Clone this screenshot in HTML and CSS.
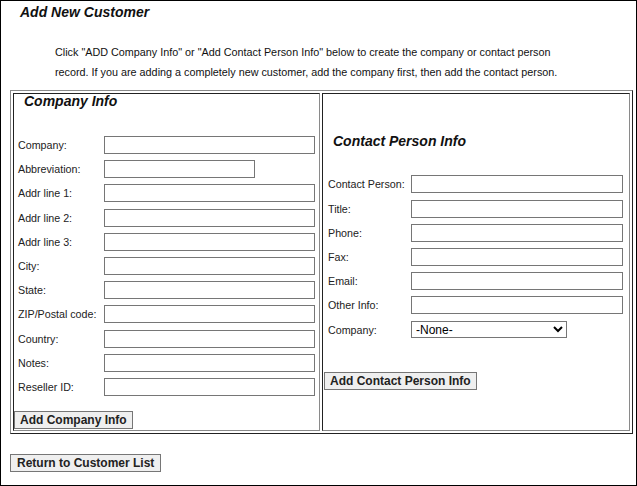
FILE: index.html
```html
<!DOCTYPE html>
<html>
<head>
<meta charset="utf-8">
<title>Add New Customer</title>
<link rel="stylesheet" href="styles.css">
</head>
<body>
<div class="page">
  <h1 class="title">Add New Customer</h1>
  <p class="intro">Click "ADD Company Info" or "Add Contact Person Info" below to create the company or contact person record. If you are adding a completely new customer, add the company first, then add the contact person.</p>
  <table class="frame">
    <tr>
      <td class="cell cell-left">
        <h2 class="section-title">Company Info</h2>
        <div class="form form-company">
          <label>Company:</label><input type="text" class="field">
          <label>Abbreviation:</label><input type="text" class="field field-short">
          <label>Addr line 1:</label><input type="text" class="field">
          <label>Addr line 2:</label><input type="text" class="field">
          <label>Addr line 3:</label><input type="text" class="field">
          <label>City:</label><input type="text" class="field">
          <label>State:</label><input type="text" class="field">
          <label>ZIP/Postal code:</label><input type="text" class="field">
          <label>Country:</label><input type="text" class="field">
          <label>Notes:</label><input type="text" class="field">
          <label>Reseller ID:</label><input type="text" class="field">
        </div>
        <button type="button" class="btn btn-company">Add Company Info</button>
      </td>
      <td class="cell cell-right">
        <h2 class="section-title section-title-contact">Contact Person Info</h2>
        <div class="form form-contact">
          <label>Contact Person:</label><input type="text" class="field">
          <label>Title:</label><input type="text" class="field">
          <label>Phone:</label><input type="text" class="field">
          <label>Fax:</label><input type="text" class="field">
          <label>Email:</label><input type="text" class="field">
          <label>Other Info:</label><input type="text" class="field">
          <label>Company:</label>
          <select class="select"><option>-None-</option></select>
        </div>
        <button type="button" class="btn btn-contact">Add Contact Person Info</button>
      </td>
    </tr>
  </table>
  <button type="button" class="btn btn-return">Return to Customer List</button>
</div>
</body>
</html>
```

FILE: styles.css
```css
html, body {
  margin: 0;
  padding: 0;
  background: #fff;
}

body {
  font-family: "Liberation Sans", Arial, sans-serif;
  color: #000;
}

.page {
  box-sizing: border-box;
  width: 637px;
  height: 486px;
  border: 1px solid #000;
  padding: 3px 0 0 9px;
  overflow: hidden;
}

.title {
  margin: 0 0 0 10px;
  font-size: 14px;
  line-height: 16px;
  font-weight: bold;
  font-style: italic;
  color: #111;
}

.intro {
  margin: 22px 0 8px 45px;
  width: 510px;
  font-size: 10.8px;
  line-height: 20px;
  color: #111;
}

.frame {
  width: 623px;
  border-collapse: separate;
  border-spacing: 2px;
  border: 1px solid;
  border-color: #8a8a8a #222 #222 #8a8a8a;
}

.cell {
  border: 1px solid;
  border-color: #222 #8a8a8a #8a8a8a #222;
  padding: 0;
}

.cell-left {
  width: 305px;
  vertical-align: top;
}

.cell-right {
  vertical-align: middle;
}

.section-title {
  margin: 0 0 0 10px;
  font-size: 14px;
  line-height: 15px;
  font-weight: bold;
  font-style: italic;
  color: #111;
}

.form {
  display: grid;
  grid-auto-rows: 18px;
  row-gap: 6.2px;
  align-items: center;
  font-size: 10.7px;
  color: #222;
}

.form label {
  white-space: nowrap;
}

.form-company {
  grid-template-columns: 86px 211px;
  margin: 27px 0 0 4px;
}

.form-contact {
  grid-template-columns: 83px 212px;
  margin: 26px 0 0 5px;
}

.field {
  box-sizing: border-box;
  width: 100%;
  height: 18px;
  margin: 0;
  padding: 1px 2px;
  border: 1px solid #767676;
  background: #fff;
  font-family: "Liberation Sans", Arial, sans-serif;
  font-size: 11px;
}

.field-short {
  width: 151px;
}

.select {
  box-sizing: border-box;
  width: 156px;
  height: 17px;
  margin: 0;
  padding: 0;
  border: 1px solid #767676;
  border-radius: 0;
  background: #fff;
  font-family: "Liberation Sans", Arial, sans-serif;
  font-size: 12px;
  color: #000;
}

.btn {
  display: block;
  box-sizing: border-box;
  height: 18px;
  margin: 0;
  padding: 0 5px;
  border: 1px solid #767676;
  border-radius: 0;
  background: #efefef;
  font-family: "Liberation Sans", Arial, sans-serif;
  font-size: 12px;
  font-weight: bold;
  color: #222;
  line-height: 16px;
}

.btn-company {
  margin: 15px 0 1px 0;
}

.btn-contact {
  margin: 33px 0 0 1px;
}

.btn-return {
  margin: 20px 0 0 0;
  padding: 0 6px;
}
```
